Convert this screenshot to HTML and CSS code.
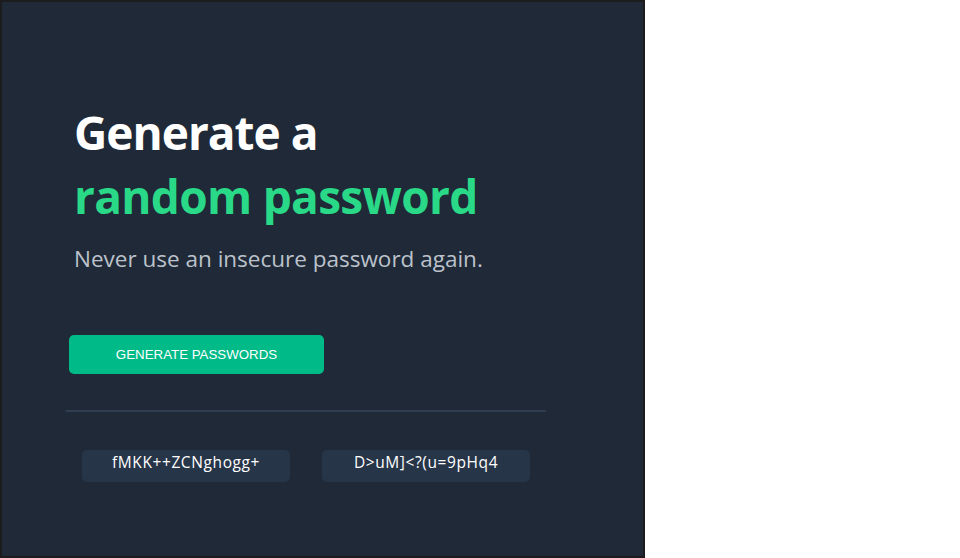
FILE: index.html
```html
<!DOCTYPE html>
<html lang="en">
<head>
<meta charset="utf-8">
<title>Password Generator</title>
<link rel="stylesheet" href="styles.css">
</head>
<body>
<main class="panel">
  <h1 class="title">
    <span class="title-line">Generate a</span>
    <span class="title-line accent">random password</span>
  </h1>
  <p class="subtitle">Never use an insecure password again.</p>
  <button class="generate-btn" type="button">GENERATE PASSWORDS</button>
  <hr class="divider">
  <div class="passwords">
    <div class="password-box">fMKK++ZCNghogg+</div>
    <div class="password-box">D&gt;uM]&lt;?(u=9pHq4</div>
  </div>
</main>
</body>
</html>
```
FILE: styles.css
```css
* { box-sizing: border-box; }

html, body {
  margin: 0;
  padding: 0;
  background: #ffffff;
}

body {
  font-family: "Open Sans", "Noto Sans", sans-serif;
}

.panel {
  width: 645px;
  min-height: 558px;
  background: #1f2937;
  border: 2px solid #1c1c1e;
  padding: 98px 0 0 67px;
}

.title {
  margin: 0 0 0 5px;
  font-weight: 700;
}

.title-line {
  display: block;
  line-height: 64px;
  font-size: 46px;
  color: #ffffff;
  letter-spacing: -1px;
}

.title-line.accent {
  font-size: 46px;
  color: #29d987;
  letter-spacing: -0.7px;
}

.subtitle {
  margin: 16px 0 0 5px;
  font-size: 22.5px;
  line-height: 30px;
  color: #bcc2cb;
}

.generate-btn {
  display: block;
  margin-top: 61px;
  width: 255px;
  height: 39px;
  border: none;
  border-radius: 5px;
  background: #00ba88;
  color: #ffffff;
  font-family: "Liberation Sans", Arial, sans-serif;
  font-size: 13.3px;
  padding: 0;
}

.divider {
  margin: 36px 0 0 -3px;
  width: 480px;
  height: 2px;
  border: none;
  background: #2f3e53;
}

.passwords {
  display: flex;
  gap: 32px;
  margin: 38px 0 0 13px;
}

.password-box {
  width: 208px;
  height: 32px;
  border-radius: 5px;
  background: #273549;
  color: #ffffff;
  font-size: 15.5px;
  line-height: 20px;
  letter-spacing: 0.6px;
  padding-top: 2px;
  text-align: center;
}
```
